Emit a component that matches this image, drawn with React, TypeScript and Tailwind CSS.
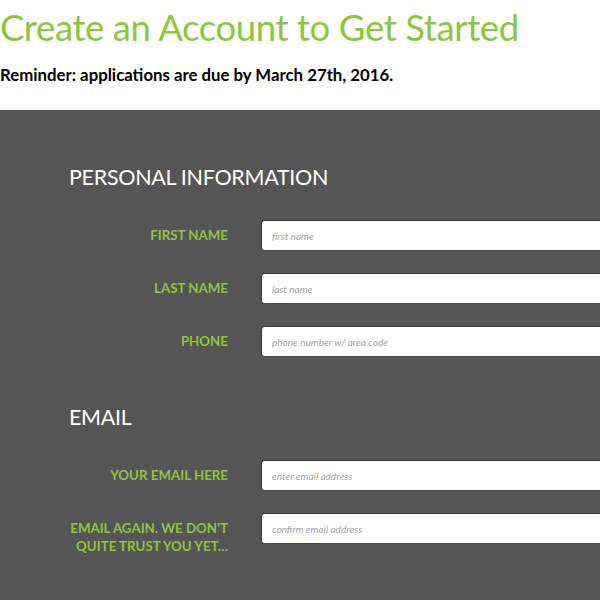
const font = "font-['Lato','Liberation_Sans',sans-serif]";

type Field = { label: React.ReactNode; placeholder: string };

const personal: Field[] = [
  { label: "FIRST NAME", placeholder: "first name" },
  { label: "LAST NAME", placeholder: "last name" },
  { label: "PHONE", placeholder: "phone number w/ area code" },
];

const email: Field[] = [
  { label: "YOUR EMAIL HERE", placeholder: "enter email address" },
  {
    label: (
      <>
        EMAIL AGAIN. WE DON’T
        <br />
        QUITE TRUST YOU YET…
      </>
    ),
    placeholder: "confirm email address",
  },
];

function Section({ title, fields }: { title: string; fields: Field[] }) {
  return (
    <section>
      <h2 className="text-[21.5px] leading-[30px] text-white tracking-[-0.3px]">{title}</h2>
      <div className="mt-[28px] grid grid-cols-[159px_520px] gap-x-[33px] gap-y-[22px]">
        {fields.map((f, i) => (
          <div key={i} className="contents">
            <label className="whitespace-nowrap pt-[6px] text-right text-[13.3px] font-bold leading-[18px] text-[#8cc63f]">
              {f.label}
            </label>
            <input
              placeholder={f.placeholder}
              className="h-[31px] rounded-[4px] border border-[#3a3a3a] border-b-[#4a4a4a] bg-white px-[10px] text-[10px] italic placeholder:text-[#a0a0a6] outline-none"
            />
          </div>
        ))}
      </div>
    </section>
  );
}

export default function App() {
  return (
    <div className={`${font} h-[600px] w-[600px] overflow-hidden bg-white`}>
      <h1 className="text-[36.5px] leading-[54px] text-[#8cc63f] tracking-[-0.4px]">
        Create an Account to Get Started
      </h1>
      <p className="mt-[11px] text-[16.8px] font-bold leading-[20px] text-black">
        Reminder: applications are due by March 27th, 2016.
      </p>
      <div className="mt-[25px] h-[600px] bg-[#555555] pl-[69px] pt-[52px]">
        <Section title="PERSONAL INFORMATION" fields={personal} />
        <div className="mt-[45px]">
          <Section title="EMAIL" fields={email} />
        </div>
      </div>
    </div>
  );
}
